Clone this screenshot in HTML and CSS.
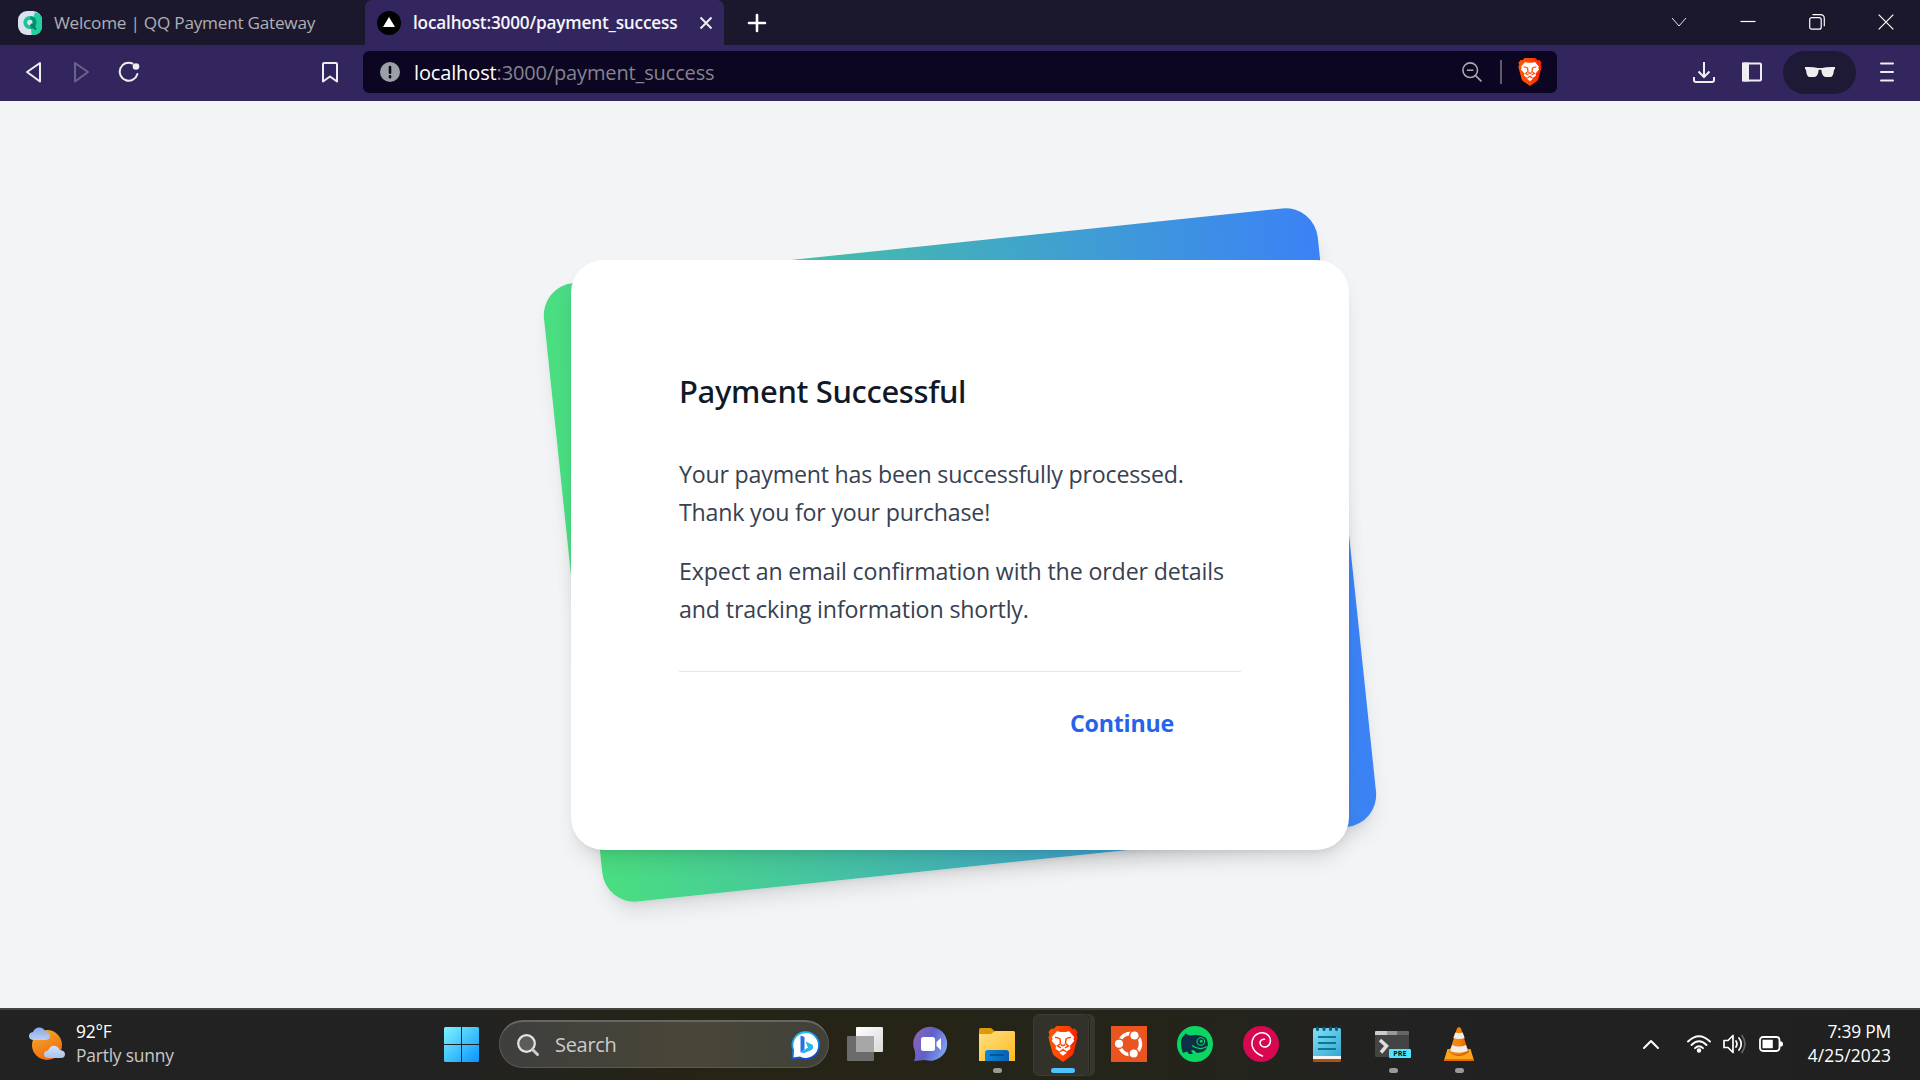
FILE: index.html
```html
<!DOCTYPE html>
<html lang="en">
<head>
<meta charset="utf-8">
<title>Payment Successful</title>
<link rel="stylesheet" href="styles.css">
</head>
<body>
<svg class="defs" width="0" height="0" aria-hidden="true">
  <defs>
    <linearGradient id="brave" x1="0" y1="0" x2="1" y2="0"><stop offset="0" stop-color="#ff5601"/><stop offset=".5" stop-color="#ff4500"/><stop offset="1" stop-color="#ff1f01"/></linearGradient>
    <linearGradient id="win" x1="0" y1="0" x2="1" y2="1"><stop offset="0" stop-color="#7df4ff"/><stop offset="1" stop-color="#0a94fb"/></linearGradient>
    <linearGradient id="sun" x1="0" y1="0" x2=".5" y2="1"><stop offset="0" stop-color="#f2b32d"/><stop offset="1" stop-color="#f06a10"/></linearGradient>
    <linearGradient id="cloud" x1="0" y1="0" x2="0" y2="1"><stop offset="0" stop-color="#86a9ea"/><stop offset=".6" stop-color="#d3e0f7"/><stop offset="1" stop-color="#a9c2ee"/></linearGradient>
    <linearGradient id="bing" x1="0" y1="0" x2=".3" y2="1"><stop offset="0" stop-color="#1fd0f5"/><stop offset="1" stop-color="#1450c8"/></linearGradient>
    <linearGradient id="chat" x1="0" y1=".2" x2="1" y2=".6"><stop offset="0" stop-color="#8e63b5"/><stop offset=".5" stop-color="#5f60cb"/><stop offset="1" stop-color="#7fa3ef"/></linearGradient>
    <linearGradient id="folder" x1="0" y1="0" x2="1" y2="1"><stop offset="0" stop-color="#ffe083"/><stop offset="1" stop-color="#fdbb20"/></linearGradient>
    <linearGradient id="tray" x1="0" y1="0" x2="1" y2="0"><stop offset="0" stop-color="#1286d8"/><stop offset="1" stop-color="#0560b4"/></linearGradient>
    <linearGradient id="note" x1="0" y1="0" x2="1" y2="1"><stop offset="0" stop-color="#83e0f8"/><stop offset="1" stop-color="#35a8cf"/></linearGradient>
    <linearGradient id="pane" x1="0" y1="0" x2="1" y2="1"><stop offset="0" stop-color="#fff"/><stop offset="1" stop-color="#d9d9d9"/></linearGradient>
    <linearGradient id="cone" x1="0" y1="0" x2="1" y2="0"><stop offset="0" stop-color="#ff9416"/><stop offset=".6" stop-color="#f47c06"/><stop offset="1" stop-color="#d75f00"/></linearGradient>
    <symbol id="lion" viewBox="0 0 30 36">
      <path fill="url(#brave)" d="M8.500 0h13l3 3 2.200-.4L29.500 6l-1 2.500 1 3-4 15.500q-.6 2-2.500 3.300L15 36l-8-5.700Q5.100 29 4.500 27L.5 11.500l1-3L.5 6l2.800-3.400L5.500 3z"/>
      <path fill="#fff" d="m8.800 5.200 3.700.8h5l3.700-.8 4.900 5.800-.7 2.300.9 1.400-4.300 5.100.4 3-3.700 2.700-3.700-3-3.700 3-3.700-2.700.4-3-4.300-5.100.9-1.400-.7-2.300z"/>
      <path fill="none" stroke="#ff4500" stroke-width="1.500" d="M7 11.600q2.500-.4 5 1.400l.5 4.500-3 2.300 3.500 2M23 11.600q-2.500-.4-5 1.400l-.5 4.500 3 2.300-3.500 2M12.800 18.800 15 19.800l2.200-1"/>
      <path fill="#fff" d="m15 24.800 3.800 2-3.800 3-3.800-3z"/>
    </symbol>
  </defs>
</svg>

<header class="browser">
  <div class="tabstrip">
    <div class="tab">
      <svg class="favicon" viewBox="0 0 24 24"><rect width="24" height="24" rx="9" fill="#d9e2ee"/><path d="M17 1.200Q24 2.500 24 9v6q0 9-9 9h-1.500l-.5-8 2-8z" fill="#22cf9d"/><circle cx="12" cy="11.500" r="4.700" fill="none" stroke="#18c795" stroke-width="3.800"/><path d="M12.500 6.800q4.200.7 4.200 4.700 0 4.300-4.300 4.700" fill="none" stroke="#0b8d78" stroke-width="3.400"/><path d="m13 13 5 5.500" stroke="#0b7d6c" stroke-width="2.500"/></svg>
      <span class="tab-title">Welcome | QQ Payment Gateway</span>
    </div>
    <div class="tab tab-active">
      <svg class="favicon" viewBox="0 0 24 24"><circle cx="12" cy="12" r="12"/><path fill="#fff" d="m12 6 6 10H6z"/></svg>
      <span class="tab-title">localhost:3000/payment_success</span>
      <svg class="tab-close" viewBox="0 0 14 14"><path d="m1.500 1.500 11 11m0-11-11 11" stroke="#eee" stroke-width="2"/></svg>
    </div>
    <svg class="new-tab" viewBox="0 0 20 20"><path d="M10 2v16M2 10h16" stroke="#fff" stroke-width="2.600" stroke-linecap="round"/></svg>
    <div class="window-controls">
      <svg class="thin" viewBox="0 0 16 16"><path d="m1 4 7 8 7-8"/></svg>
      <svg viewBox="0 0 16 16"><path d="M.5 7.500h15"/></svg>
      <svg viewBox="0 0 16 16"><rect x=".7" y="3.700" width="11.500" height="11.500" rx="2"/><path d="M3.500.7h7.800q4 0 4 4v7.500"/></svg>
      <svg viewBox="0 0 16 16"><path d="m.7.7 14.600 14.600m0-14.600L.7 15.300"/></svg>
    </div>
  </div>

  <div class="toolbar">
    <nav class="nav">
      <svg viewBox="0 0 22 22"><path d="M17 2v18.500L4 11z"/></svg>
      <svg class="dim" viewBox="0 0 22 22"><path d="M4 2v18.500L17 11z"/></svg>
      <svg viewBox="0 0 22 22"><path d="M13.500 2.500A9 9 0 1 0 18.400 13"/><circle cx="17" cy="5.500" r="3.300" class="dot"/></svg>
      <svg class="bookmark" viewBox="0 0 22 22"><path d="M4 3q0-1 1-1h12q1 0 1 1v17.500l-7-5-7 5z"/></svg>
    </nav>
    <div class="omnibox">
      <svg class="site-info" viewBox="0 0 20 20"><circle cx="10" cy="10" r="10" fill="#9aa0a6"/><path d="M10 5v5.700M10 14.300v1" stroke="#0c0622" stroke-width="2.600" stroke-linecap="round"/></svg>
      <p class="url"><span class="host">localhost</span>:3000/payment_success</p>
      <svg class="zoom-out" viewBox="0 0 20 20"><circle cx="8.200" cy="8.200" r="7.300"/><path d="M5 8.200h6.400m2 5.200 6 6"/></svg>
      <span class="separator"></span>
      <svg class="shield" viewBox="0 0 30 36" preserveAspectRatio="none"><use href="#lion"/></svg>
    </div>
    <div class="tools">
      <svg class="download" viewBox="0 0 22 22"><path d="M11 1v15m-5.500-5.500L11 16l5.500-5.500M1 16v3q0 2 2 2h16q2 0 2-2v-3"/></svg>
      <svg class="panel-toggle" viewBox="0 0 20 20"><rect x="1" y="1.500" width="18" height="17" rx="1"/><path class="solid" d="M1 1.500h5v17H1z"/></svg>
      <span class="private"><svg viewBox="0 0 30 11"><path fill="#eee" d="M0 0q8-.5 13 1h4q5-1.500 13-1v2l-1 .7q-.6 6.800-3.300 7.300h-5.400q-3.300-.5-4-7.200h-2.600q-.7 6.700-4 7.200H4.300Q1.600 9.500 1 2.700L0 2z"/></svg></span>
      <svg class="menu" viewBox="0 0 14 20"><path d="M1 1.500h12M1 10h12M1 18.500h12"/></svg>
    </div>
  </div>
</header>

<main class="page">
  <div class="stack">
    <div class="backdrop"></div>
    <section class="card">
      <h1>Payment Successful</h1>
      <p>Your payment has been successfully processed.<br>Thank you for your purchase!</p>
      <p>Expect an email confirmation with the order details<br>and tracking information shortly.</p>
      <div class="actions"><a class="continue">Continue</a></div>
    </section>
  </div>
</main>

<footer class="taskbar">
  <div class="weather">
    <svg viewBox="0 0 36 36"><circle cx="18" cy="19" r="15" fill="url(#sun)"/><path fill="url(#cloud)" d="M4 14q-4-.5-4-4t4-4Q6 1 11 1.500q4 .5 5 4 5 .5 5 4.500 0 3.500-4 4zM19 32q-4-.3-4-3.700t4-3.800q2-5 6.500-4.800 4 .3 5 4.300 5.500.3 5.500 4.300 0 3.500-4 3.700z"/></svg>
    <div class="weather-text"><p class="temp">92°F</p><p class="sky">Partly sunny</p></div>
  </div>

  <svg class="start" viewBox="0 0 35 35"><path fill="url(#win)" d="M1.500 0H17v17H0V1.500Q0 0 1.500 0zM18 0h15.500Q35 0 35 1.500V17H18zM0 18h17v17H1.500Q0 35 0 33.500zM18 18h17v15.500q0 1.500-1.500 1.500H18z"/></svg>

  <div class="search">
    <svg class="glass" viewBox="0 0 22 22"><circle cx="9.500" cy="9.500" r="8.300" fill="#5c5c5a" stroke="#e4e4e4" stroke-width="2.200"/><path d="m15.500 15.500 5 5" stroke="#ccc" stroke-width="3" stroke-linecap="round"/></svg>
    <span class="search-label">Search</span>
    <svg class="bing" viewBox="0 0 30 30"><path fill="#fff" stroke="url(#bing)" stroke-width="1.800" d="M1.500 28.500 2.200 20A13.300 13.300 0 1 1 9 27.500z"/><path fill="#2b6fe8" d="m9.500 5.500 4 1.500v12.500l-4 3z"/><path fill="#25b4ef" d="m14.500 11.500 7 3.300q2 3.700-1.500 5.500l-7.500 3-3-1 7.500-4.800z"/></svg>
  </div>

  <div class="apps">
    <div class="app"><svg viewBox="0 0 36 36"><rect x="9" y="1" width="27" height="25" rx="1" fill="url(#pane)"/><rect y="10" width="27" height="25" rx="1" fill="#6b6b6b"/><path fill="#a7a7a7" d="M9 10h18v16H9z"/></svg></div>
    <div class="app"><svg viewBox="0 0 36 36"><path fill="url(#chat)" d="M1 35q2-3.500.8-10A17 17 0 1 1 12 34z"/><rect x="8" y="11" width="14" height="14" rx="2.500" fill="#fff"/><path fill="#fff" d="m23.500 16 4.500-4v12l-4.500-4z"/></svg></div>
    <div class="app running"><svg viewBox="0 0 36 36"><path fill="#dc9b06" d="M0 9V3.500Q0 2 1.500 2h10.500l3.500 3v4z"/><path fill="url(#folder)" d="M0 8h12l4-3h18.500Q36 5 36 6.500V35H0z"/><path fill="url(#tray)" d="M6 35v-8q0-3 3-3h18q3 0 3 3v8z"/><path d="M11 29h14" stroke="#064b86" stroke-width="1.500"/></svg></div>
    <div class="app focused"><svg viewBox="0 0 36 36"><use href="#lion" x="3" width="30" height="36"/></svg></div>
    <div class="app"><svg viewBox="0 0 36 36"><path fill="#e95420" d="M0 0h36v36H0z"/><circle cx="19" cy="18" r="10.500" fill="none" stroke="#fff" stroke-width="3.400"/><g fill="#fff" stroke="#e95420" stroke-width="1.500"><circle cx="8" cy="17.700" r="4.800"/><circle cx="23.500" cy="9.500" r="4.800"/><circle cx="22.700" cy="27.500" r="4.800"/></g></svg></div>
    <div class="app"><svg viewBox="0 0 36 36"><circle cx="18" cy="18" r="18" fill="#0bd661"/><path fill="#0d3048" d="M4 15Q5 10 7.500 9.500L8 7.500l5 2q10-1.500 16 2.500 2 3 2 7-1.500 7.500-11 8l-3.500-3-2.500.5 2 3.500h-4l-2-2.500-4 1.500Q4 23 4 15z"/><circle cx="23.800" cy="15.500" r="3.800" fill="none" stroke="#0bd661" stroke-width="1.100"/><circle cx="24.300" cy="15.300" r="1.500" fill="#0bd661"/><path d="M15 19.500q7 5.500 15.500 1" fill="none" stroke="#0bd661" stroke-width="1.200"/></svg></div>
    <div class="app"><svg viewBox="0 0 36 36"><circle cx="18" cy="18" r="18" fill="#d70751"/><path fill="none" stroke="#fff" stroke-width="1.500" stroke-linecap="round" d="M19.500 30C11 27 7.500 20 9.500 14 12 6.500 21 4.500 25.500 9.500c3 3.500 2.500 9-1.500 11-3.500 1.500-7-.5-7-3.500 0-2.500 2-4 4.500-3.800"/></svg></div>
    <div class="app"><svg viewBox="0 0 36 36"><path fill="#ad520f" d="M4 31h28v3.500q0 1.500-1.500 1.500h-25Q4 36 4 34.500z"/><path fill="#f4f4f4" d="M4 29h28v4H4z"/><path fill="url(#note)" d="M5.500 2h25Q32 2 32 3.500V30H4V3.500Q4 2 5.500 2z"/><path d="M9 11h18M9 17h18M9 23h18" stroke="#0b7796" stroke-width="2"/><path d="M8.500 2v1.500M15 2v1.500M21.500 2v1.500M27.500 2v1.500" stroke="#075e7b" stroke-width="3" stroke-linecap="round"/></svg></div>
    <div class="app running"><svg viewBox="0 0 36 36"><path fill="#444" d="M0 6h34v25H1.500Q0 31 0 29.500z"/><path fill="#ccc" d="M0 9V6q0-1 1-1h11v4z"/><path fill="#999" d="M12 5h10v4H12z"/><path fill="#666" d="M22 5h11q1 0 1 1v3H22z"/><path d="m5 14 6.500 6L6 26.500" fill="none" stroke="#ddd" stroke-width="3.500"/><rect x="14" y="23" width="22" height="9" rx="1" fill="#4ee6fd"/><text class="pre" x="25" y="30.200" text-anchor="middle">PRE</text></svg></div>
    <div class="app running"><svg viewBox="0 0 36 36"><path fill="#ffa51c" d="M6.500 23h23L33 34.500H3z"/><path fill="#e56a00" d="M3 33h30v2H3z"/><path fill="#cf6000" d="M8 26q10 8 20 0l-1-4H9z"/><path fill="url(#cone)" d="M16 2.500q2-3 4 0L27.500 26q-9.500 6-19 0z"/><path fill="#eee" d="m14.300 6.500-2 5.500q5.700 2 11.400 0l-2-5.500q-3.700 1.500-7.400 0zM11 19l-1.800 6q8.800 3.500 17.600 0L25 19q-7 3-14 0z"/></svg></div>
  </div>

  <div class="tray">
    <svg class="chevron" viewBox="0 0 18 12"><path d="m2 10 7-7 7 7" stroke-width="2"/></svg>
    <svg class="wifi" viewBox="0 0 24 18"><path d="M1 6.500q11-10.500 22 0M4.500 10q7.500-7.500 15 0M8 13.200q4-4 8 0" stroke-width="1.900"/><circle cx="12" cy="15.500" r="2.200" fill="#fff" stroke="none"/></svg>
    <svg class="volume" viewBox="0 0 24 20"><path d="M1 6.500h4l5-5v17l-5-5H1zM13 7q2 3 0 6m3-9q4.500 6 0 12" stroke-width="1.700"/><path d="M19 1.500q6 8.500 0 17" stroke="#666" stroke-width="1.700"/></svg>
    <svg class="battery" viewBox="0 0 24 16"><rect x="1" y="1" width="19.500" height="14" rx="3" stroke-width="1.800"/><path d="M3.500 3.800h10.300v8.400H3.500zM21 5.500h1.500q1.500 0 1.500 2.500t-1.500 2.500H21z" fill="#fff" stroke="none"/></svg>
    <div class="clock"><p class="time">7:39 PM</p><p class="date">4/25/2023</p></div>
  </div>
</footer>
</body>
</html>
```
FILE: styles.css
```css
* { box-sizing: border-box; }

body {
  margin: 0;
  width: 1920px;
  height: 1080px;
  overflow: hidden;
  display: grid;
  grid-template-rows: 101px 1fr 72px;
  font-family: "Open Sans", "Noto Sans", sans-serif;
  background: #f3f4f6;
}

p, h1 { margin: 0; white-space: nowrap; }
svg { display: block; flex: none; overflow: visible; }
.defs { position: absolute; }

/* Browser window */
.browser { grid-row: 1; background: #33265f; }

.tabstrip {
  height: 45px;
  display: flex;
  align-items: center;
  background: #1b182e;
}
.tab {
  display: flex;
  align-items: center;
  width: 365px;
  height: 45px;
  padding-left: 18px;
  font-size: 17.2px;
  letter-spacing: -0.25px;
  color: #b0afb3;
}
.tab-active {
  width: 359px;
  padding: 0 11px 0 12px;
  background: #33265f;
  border-radius: 7px 7px 0 0;
  color: #f5f4f7;
  font-weight: 600;
  letter-spacing: -0.19px;
}
.favicon { width: 24px; height: 24px; margin-right: 12px; }
.tab-title { white-space: nowrap; }
.tab-close { width: 14px; height: 14px; margin-left: auto; }
.new-tab { width: 20px; height: 20px; margin-left: 23px; }
.window-controls {
  display: flex;
  gap: 53px;
  margin: 0 26px 2px auto;
}
.window-controls svg {
  width: 16px;
  height: 16px;
  fill: none;
  stroke: #fff;
  stroke-width: 1.2;
}
.window-controls .thin { stroke-width: 0.9; }

.toolbar {
  height: 56px;
  display: flex;
  align-items: center;
  padding-bottom: 2px;
}
.nav { display: flex; width: 363px; padding-left: 23px; gap: 26px; }
.nav svg {
  width: 22px;
  height: 22px;
  fill: none;
  stroke: #eee;
  stroke-width: 2;
  stroke-linejoin: round;
  stroke-linecap: round;
}
.nav .dim { opacity: .3; }
.nav .dot { fill: #eee; stroke: none; }
.nav .bookmark { margin-left: 152px; }

.omnibox {
  display: flex;
  align-items: center;
  width: 1194px;
  height: 42px;
  padding: 0 15px 0 17px;
  border-radius: 6px;
  background: #0c0622;
}
.site-info { width: 20px; height: 20px; margin-right: 14px; }
.url { font-size: 20px; letter-spacing: -0.14px; color: #86838f; }
.host { color: #fff; }
.zoom-out {
  width: 20px;
  height: 20px;
  margin-left: auto;
  fill: none;
  stroke: #aaa9b0;
  stroke-width: 1.6;
}
.separator { width: 2px; height: 24px; margin: 0 16px 0 18px; background: #5d5a6b; }
.shield { width: 24px; height: 28px; }

.tools { display: flex; align-items: center; flex: 1; padding-left: 136px; }
.tools > svg { fill: none; stroke: #eee; stroke-width: 2; }
.download { width: 22px; height: 22px; }
.panel-toggle { width: 20px; height: 20px; margin-left: 27px; stroke-width: 1.6; }
.panel-toggle .solid { fill: #eee; }
.private {
  display: grid;
  place-items: center;
  width: 73px;
  height: 43px;
  margin: 0 24px 0 21px;
  border-radius: 22px;
  background: #1e1935;
}
.private svg { width: 30px; height: 11px; }
.menu { width: 14px; height: 20px; stroke-linecap: round; }

/* Payment page */
.page { grid-row: 2; padding: 159px 571px 0; background: #f3f4f6; }
.stack { display: grid; width: 778px; height: 590px; }
.backdrop, .card {
  grid-area: 1 / 1;
  border-radius: 32.4px;
  box-shadow: 0 13.5px 20px -4px rgba(0, 0, 0, .1), 0 5.4px 8px -5.4px rgba(0, 0, 0, .1);
}
.backdrop {
  margin: -16px 0;
  background: linear-gradient(to right, #4ade80, #3b82f6);
  transform: rotate(-6deg);
}
.card {
  z-index: 1;
  padding: 110px 108px 0;
  background: #fff;
  color: #374151;
  font-size: 23.2px;
  line-height: 37.8px;
  letter-spacing: -0.21px;
}
.card h1 {
  margin-bottom: 42.5px;
  font: 500 31px/43.2px "Noto Sans", sans-serif;
  letter-spacing: -0.34px;
  color: #111827;
}
.card p + p { margin-top: 21.7px; letter-spacing: -0.14px; }
.actions {
  display: flex;
  justify-content: flex-end;
  margin-top: 42.2px;
  padding: 33px 67px 0 0;
  border-top: 1px solid #e5e7eb;
}
.continue { color: #2563eb; font-weight: 700; letter-spacing: -0.2px; }

/* Taskbar */
.taskbar {
  grid-row: 3;
  display: flex;
  align-items: center;
  height: 72px;
  border-top: 2px solid #444442;
  padding-bottom: 2px;
  background: linear-gradient(90deg, #222 0, #222 440px, #262415 700px, #25241a 1160px, #222 1400px, #202020 100%);
  color: #fff;
  font-size: 17.4px;
  line-height: 24px;
  letter-spacing: -0.2px;
}
.weather { display: flex; align-items: center; width: 444px; padding-left: 29px; gap: 11px; }
.weather svg { width: 36px; height: 36px; }
.weather-text { margin-top: -2px; }
.sky { color: #c8c8c8; }
.start { width: 35px; height: 35px; margin-top: 1px; }
.search {
  display: flex;
  align-items: center;
  width: 330px;
  height: 48px;
  margin: 0 3px 0 20px;
  padding: 0 7px 0 17px;
  border: 1px solid #5b5a55;
  border-top: 2px solid #686661;
  border-radius: 24px;
  background: linear-gradient(90deg, #3e3e3e, #494737 60%, #41403a);
}
.glass { width: 22px; height: 22px; margin-right: 16px; }
.search-label { font-size: 20px; letter-spacing: -0.3px; color: #ccc; }
.bing { width: 30px; height: 30px; margin-left: auto; }

.apps { display: flex; height: 70px; }
.app {
  position: relative;
  display: grid;
  place-items: center;
  width: 66px;
  height: 70px;
}
.app svg { position: relative; width: 36px; height: 36px; }
.running::after, .focused::after {
  content: "";
  position: absolute;
  left: 29px;
  top: 59px;
  width: 9px;
  height: 5px;
  border-radius: 3px;
  background: #999;
}
.focused::after { left: 21px; width: 24px; background: #4cc2ff; }
.focused::before {
  content: "";
  position: absolute;
  left: 3px;
  top: 5px;
  width: 54px;
  height: 60px;
  border: 1px solid #3d3c33;
  border-radius: 6px;
  background: #33322a;
  box-shadow: 1px 0 0 #25241a, 6px 0 0 #38372d;
}
.pre { font: 700 7.200px "Open Sans", sans-serif; fill: #111; letter-spacing: 0; }

.tray { display: flex; align-items: center; flex: 1; padding: 0 29px 0 150px; }
.tray svg { fill: none; stroke: #fff; stroke-linejoin: round; stroke-linecap: round; }
.chevron { width: 18px; height: 12px; }
.wifi { width: 24px; height: 18px; margin-left: 27px; }
.volume { width: 24px; height: 20px; margin-left: 12px; }
.battery { width: 24px; height: 16px; margin-left: 12px; }
.clock { margin: -2px 0 0 auto; text-align: right; }
.date { letter-spacing: 0.1px; }
```
